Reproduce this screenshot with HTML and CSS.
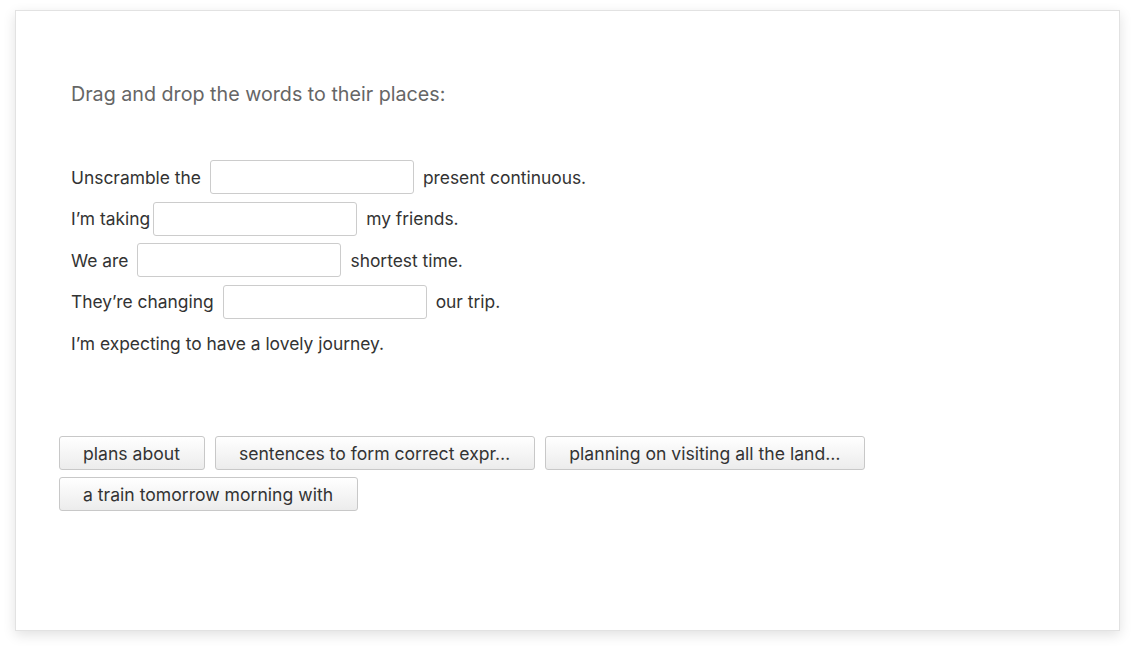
FILE: index.html
```html
<!DOCTYPE html>
<html>
<head>
<meta charset="utf-8">
<link rel="stylesheet" href="styles.css">
</head>
<body>
<div class="card">
  <div class="task">
    <p class="prompt">Drag and drop the words to their places:</p>
    <div class="sentences">
      <div class="line"><span>Unscramble the</span><span class="drop sp"></span><span>present continuous.</span></div>
      <div class="line"><span>I’m taking</span><span class="drop"></span><span>my friends.</span></div>
      <div class="line"><span>We are</span><span class="drop sp"></span><span>shortest time.</span></div>
      <div class="line"><span>They’re changing</span><span class="drop sp"></span><span>our trip.</span></div>
      <div class="line"><span>I’m expecting to have a lovely journey.</span></div>
    </div>
  </div>
  <div class="bank">
    <button class="word">plans about</button>
    <button class="word">sentences to form correct expr…</button>
    <button class="word">planning on visiting all the land…</button>
    <button class="word">a train tomorrow morning with</button>
  </div>
</div>
</body>
</html>
```
FILE: styles.css
```css
html, body {
  margin: 0;
  padding: 0;
  background: #ffffff;
}
body {
  padding: 10px 16px 21px 15px;
  font-family: Inter, Roboto, "Liberation Sans", sans-serif;
}
.card {
  box-sizing: border-box;
  width: 1105px;
  height: 621px;
  border: 1px solid #e2e2e2;
  background: #fff;
  box-shadow: 0 4px 12px rgba(0, 0, 0, 0.12);
  padding: 0 43px;
}
.task {
  padding: 0 12px;
}
.prompt {
  margin: 0;
  padding-top: 71px;
  font-size: 19.7px;
  line-height: 24px;
  color: #666;
}
.sentences {
  margin-top: 54px;
  font-size: 17.4px;
  color: #333;
}
.line {
  display: flex;
  align-items: center;
  height: 34px;
  margin-bottom: 7.5px;
}
.drop {
  display: inline-block;
  box-sizing: border-box;
  width: 204px;
  height: 34px;
  border: 1px solid #ccc;
  border-radius: 3px;
  background: #fff;
  margin: 0 9px 0 3px;
}
.drop.sp {
  margin-left: 9px;
}
.bank {
  margin-top: 76px;
  display: flex;
  flex-wrap: wrap;
  gap: 7px 10px;
  width: 840px;
}
.word {
  font-family: inherit;
  font-size: 17.6px;
  color: #333;
  height: 34px;
  padding: 0 24px 0 23px;
  border: 1px solid #c8c8c8;
  border-radius: 3px;
  background: linear-gradient(#ffffff, #ececec);
  cursor: pointer;
}
```
